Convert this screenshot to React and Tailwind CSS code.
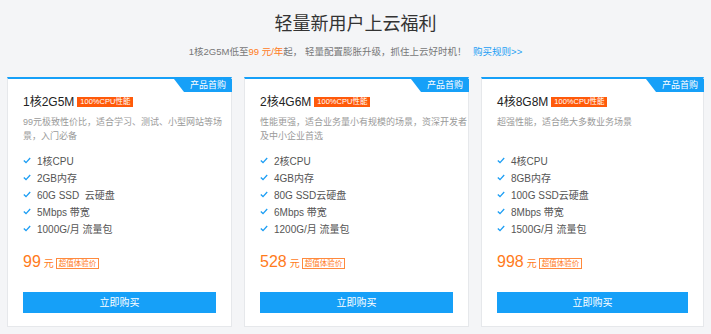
const plans = [
  {
    name: "1核2G5M",
    desc: ["99元极致性价比，适合学习、测试、小型网站等场", "景，入门必备"],
    specs: ["1核CPU", "2GB内存", "60G SSD  云硬盘", "5Mbps 带宽", "1000G/月 流量包"],
    price: "99",
  },
  {
    name: "2核4G6M",
    desc: ["性能更强，适合业务量小有规模的场景，资深开发者", "及中小企业首选"],
    specs: ["2核CPU", "4GB内存", "80G SSD云硬盘", "6Mbps 带宽", "1200G/月 流量包"],
    price: "528",
  },
  {
    name: "4核8G8M",
    desc: ["超强性能，适合绝大多数业务场景"],
    specs: ["4核CPU", "8GB内存", "100G SSD云硬盘", "8Mbps 带宽", "1500G/月 流量包"],
    price: "998",
  },
];

const Check = () => (
  <svg width="8" height="7" viewBox="0 0 8 7" className="mt-[4px] shrink-0">
    <path d="M0.8 3.6 L3 5.6 L7.2 1" fill="none" stroke="#1c9ef4" strokeWidth="1.3" />
  </svg>
);

const PlanCard = ({ plan }) => {
  return (
    <div className="relative w-[225px] bg-white border border-[#e6e8eb] border-t-2 border-t-[#16a0f8] px-[15px] pt-[15px] pb-[13px]">
      {/* corner badge */}
      <div className="absolute top-0 right-[-1px] h-[13px] w-[58px] bg-[#16a0f8] [clip-path:polygon(0_0,100%_0,100%_100%,10px_100%)] flex items-center justify-end pr-[6px]">
        <span className="text-[9px] leading-none text-white">产品首购</span>
      </div>

      <div className="flex items-center h-[16px]">
        <span className="text-[12px] text-[#222]">{plan.name}</span>
        <span className="ml-[3px] bg-[#ff5a0a] text-white text-[7.5px] leading-[10px] px-[3px]">100%CPU性能</span>
      </div>

      <div className="mt-[5px] h-[28px] text-[9px] leading-[14px] text-[#9a9a9a] whitespace-nowrap">
        {plan.desc.map((line) => (
          <div key={line}>{line}</div>
        ))}
      </div>

      <ul className="mt-[10px]">
        {plan.specs.map((s) => (
          <li key={s} className="flex items-start gap-[6px] h-[17px]">
            <Check />
            <span className="text-[10px] leading-[17px] text-[#555] whitespace-pre">{s}</span>
          </li>
        ))}
      </ul>

      <div className="mt-[14px] flex items-center h-[20px]">
        <span className="text-[16px] leading-none text-[#ff7b1c]">{plan.price}</span>
        <span className="ml-[3px] mt-[3px] text-[10px] text-[#ff7b1c]">元</span>
        <span className="ml-[2px] mt-[3px] border border-[#ff8a3d] text-[#ff7b1c] text-[7.5px] leading-[9px] px-[2px]">超值体验价</span>
      </div>

      <button className="mt-[20px] w-full h-[21px] bg-[#16a0f8] text-white text-[10px]">立即购买</button>
    </div>
  );
};

export default function App() {
  return (
    <div
      className="w-[711px] h-[334px] bg-[#f4f5f7] overflow-hidden"
      style={{ fontFamily: '"Liberation Sans", "Noto Sans CJK SC", sans-serif' }}
    >
      <div className="pt-[13px] text-center">
        <h1 className="text-[18px] leading-[22px] text-[#333]">轻量新用户上云福利</h1>
        <p className="mt-[10px] text-[9.5px] leading-[14px] text-[#777]">
          1核2G5M低至<span className="text-[#ff7b1c]">99 元/年</span>起， 轻量配置膨胀升级，抓住上云好时机！{" "}
          <span className="ml-[4px] text-[#1c9ef4]">购买规则&gt;&gt;</span>
        </p>
      </div>

      <div className="mt-[18px] flex gap-[12px] px-[7px]">
        {plans.map((p) => (
          <PlanCard key={p.name} plan={p} />
        ))}
      </div>
    </div>
  );
}
